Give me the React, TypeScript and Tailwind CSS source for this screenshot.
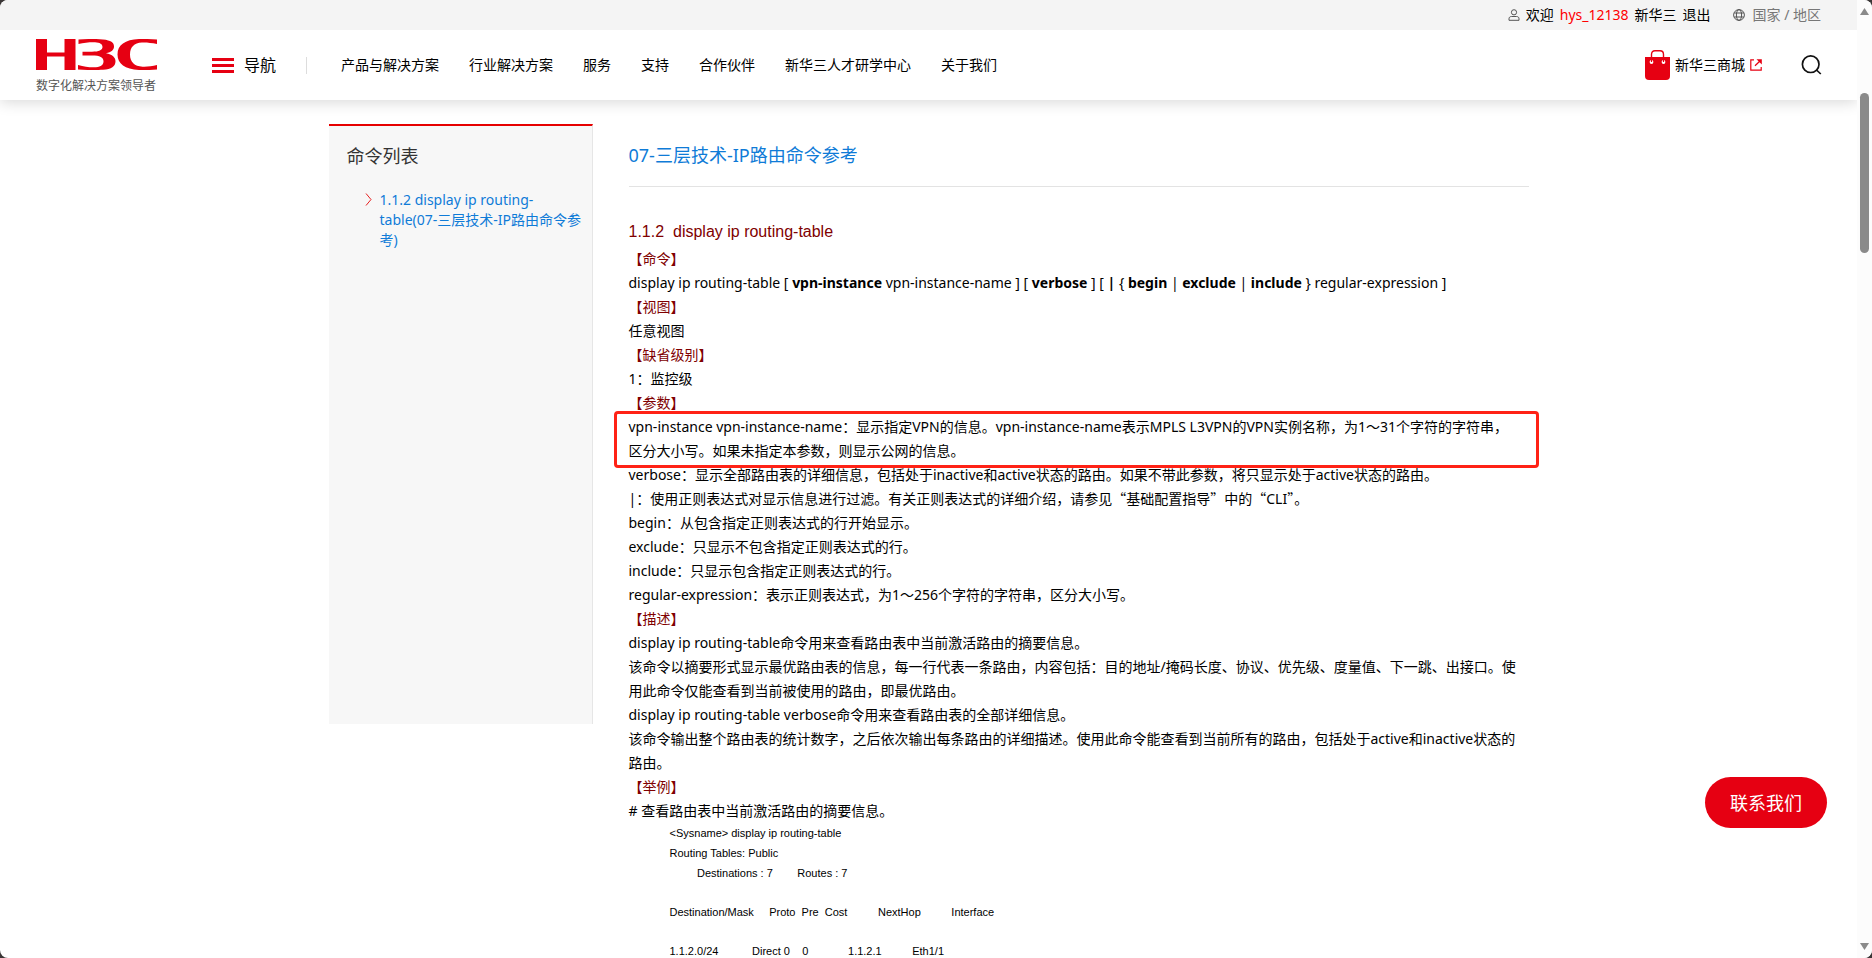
import React from "react";

const NAV_ITEMS = ["产品与解决方案", "行业解决方案", "服务", "支持", "合作伙伴", "新华三人才研学中心", "关于我们"];

function Logo() {
  return (
    <svg viewBox="0 0 121 31" className="h-[31px] w-[121px]" fill="#e60012" role="img" aria-label="H3C">
      <path d="M0 0h11v13.500h17.500V0h11v31h-11V17.500H11V31H0z" />
      <path d="M42.500 .5C50-.1 60-.3 67 .4C75 1.200 78 3.500 78 7.400C78 10.800 75.500 13 70 14.300C76.500 15.600 79.500 18.500 79.500 22.300C79.500 27.500 75.500 30.200 67 30.800C59 31.300 50 31.100 42 30.500V26C49 28 55 28.600 60 28.200C65.500 27.700 67.500 25.500 67.500 22.300C67.500 18.500 64 16.500 56 16.500H46.500V12.700H56C63 12.700 66.500 11 66.500 8C66.500 5 64 3.500 59 3.200C54 3 48 3.700 42.500 5z" />
      <path d="M121 .6V5C115 3.800 110.500 3.300 106 3.500C98 4 94 8 94 15.500C94 23 98.500 27.300 106.500 27.700C111 27.900 116 27.300 121 26V30.500C115 31.100 109 31.200 103 30.900C89 30.200 81.500 25 81.500 15.500C81.500 6 89 .8 103 .1C109-.2 115 0 121 .6z" />
    </svg>
  );
}

function UserIcon() {
  return (
    <svg viewBox="0 0 12 12" className="size-3" fill="none" stroke="#555" strokeWidth="1">
      <circle cx="6" cy="3.300" r="2.600" />
      <path d="M1 11.300V9.800C1 8.300 2 7.500 3.500 7.500h5C10 7.500 11 8.300 11 9.800v1.500z" />
    </svg>
  );
}

function GlobeIcon() {
  return (
    <svg viewBox="0 0 12 12" className="size-3" fill="none" stroke="#555" strokeWidth="1">
      <circle cx="6" cy="6" r="5.400" />
      <ellipse cx="6" cy="6" rx="2.600" ry="5.400" />
      <path d="M1.200 4h9.600M1.200 8h9.600" />
    </svg>
  );
}

function BagIcon() {
  return (
    <svg viewBox="0 0 25 30" className="h-[30px] w-[25px]">
      <path d="M6.500 8V4.500Q6.500 .8 10 .8h5Q18.500 .8 18.500 4.500V8" fill="none" stroke="#e60012" strokeWidth="1.400" />
      <path d="M0 7h25v19q0 4-4 4H4q-4 0-4-4z" fill="#e60012" />
      <circle cx="6.500" cy="12" r="1.900" fill="#fff" />
      <circle cx="18.500" cy="12" r="1.900" fill="#fff" />
      <path d="M6.500 9v3M18.500 9v3" stroke="#e60012" strokeWidth="1.200" />
    </svg>
  );
}

function ExternalIcon() {
  return (
    <svg viewBox="0 0 12 12" className="size-3" fill="none" stroke="#e60012" strokeWidth="1.200">
      <path d="M4 .8H.8v10.400h10.400V8" />
      <path d="M5 6.800L10 2" />
      <path d="M6.500 .2h5.300v5.300z" fill="#e60012" stroke="none" />
    </svg>
  );
}

function SearchIcon() {
  return (
    <svg viewBox="0 0 21 20" className="h-5 w-[21px]" fill="none" stroke="#111" strokeWidth="1.700">
      <circle cx="9.700" cy="9.200" r="8.300" />
      <path d="M15.500 15L19.800 19" />
    </svg>
  );
}

function Label({ children }: { children: React.ReactNode }) {
  return <h3 className="text-[#800000]">{children}</h3>;
}

function Quoted({ children }: { children: React.ReactNode }) {
  return (
    <>
      <span className="font-['Noto_Sans_CJK_SC',sans-serif] leading-none">“</span>
      {children}
      <span className="font-['Noto_Sans_CJK_SC',sans-serif] leading-none">”</span>
    </>
  );
}

function TopBar() {
  return (
    <div className="relative z-10 flex h-[30px] items-center justify-end bg-[#f4f4f4] pr-9">
      <UserIcon />
      <span className="ml-[6px]">欢迎</span>
      <a href="#user" className="ml-[6px] text-[#ff0000]">hys_12138</a>
      <a href="#home" className="ml-[6px]">新华三</a>
      <a href="#logout" className="ml-[6px]">退出</a>
      <a href="#region" className="ml-[22px] flex items-center gap-2 text-[#777]">
        <GlobeIcon />
        国家 / 地区
      </a>
    </div>
  );
}

function Header() {
  return (
    <header className="relative flex h-[70px] items-center bg-white pr-[35px] pl-9 shadow-[0_2px_14px_rgba(0,0,0,0.16)]">
      <a href="#h3c" className="flex flex-col gap-2 pt-[3px]">
        <Logo />
        <span className="text-xs leading-4 text-[#555]">数字化解决方案领导者</span>
      </a>
      <button className="ml-[55px] flex items-center gap-[10px] text-base">
        <span className="flex w-[22px] flex-col gap-[3px]">
          <span className="h-[3px] bg-[#e60012]" />
          <span className="h-[3px] bg-[#e60012]" />
          <span className="h-[3px] bg-[#e60012]" />
        </span>
        导航
      </button>
      <span className="ml-[30px] h-[17px] w-px bg-[#ddd]" />
      <nav className="ml-[34px] flex gap-[30px]">
        {NAV_ITEMS.map((item) => (
          <a key={item} href="#nav">{item}</a>
        ))}
      </nav>
      <a href="#mall" className="ml-auto flex items-center gap-[5px]">
        <BagIcon />
        新华三商城
        <ExternalIcon />
      </a>
      <button aria-label="搜索" className="ml-[39px]">
        <SearchIcon />
      </button>
    </header>
  );
}

function Sidebar() {
  return (
    <aside className="h-[600px] w-[264px] shrink-0 border-t-2 border-r border-t-[#e60000] border-r-[#e6e6e6] bg-[#f7f7f7] pt-[18px] pl-[18px]">
      <h2 className="text-lg leading-6 text-[#333]">命令列表</h2>
      <a href="#display" className="mt-[22px] flex gap-2 pl-[18px] leading-5 text-[#0f7bd7]">
        <svg viewBox="0 0 7 13" className="mt-[3px] h-[13px] w-[7px] shrink-0" fill="none" stroke="#e62020">
          <path d="M1 .5L6 6.500L1 12.500" />
        </svg>
        <span>
          1.1.2 display ip routing-
          <br />
          table(07-三层技术-IP路由命令参
          <br />
          考)
        </span>
      </a>
    </aside>
  );
}

function Article() {
  return (
    <main className="min-w-0 flex-1 leading-6">
      <h1 className="border-b border-[#e3e3e3] pt-[19px] pb-[19px] text-lg leading-6 text-[#0f7bd7]">
        07-三层技术-IP路由命令参考
      </h1>
      <h2 className="mt-[33px] mb-[3px] whitespace-pre font-['Liberation_Sans',Arial,sans-serif] text-base leading-6 text-[#800000]">
        {"1.1.2  display ip routing-table"}
      </h2>
      <Label>【命令】</Label>
      <p>
        display ip routing-table [ <b>vpn-instance</b> vpn-instance-name ] [ <b>verbose</b> ] [ <b>|</b> {"{"} <b>begin</b> | <b>exclude</b> | <b>include</b> {"}"} regular-expression ]
      </p>
      <Label>【视图】</Label>
      <p>任意视图</p>
      <Label>【缺省级别】</Label>
      <p>1：监控级</p>
      <Label>【参数】</Label>
      <div className="relative">
        <p>
          vpn-instance vpn-instance-name：显示指定VPN的信息。vpn-instance-name表示MPLS L3VPN的VPN实例名称，为1～31个字符的字符串，
          <br />
          区分大小写。如果未指定本参数，则显示公网的信息。
        </p>
        <div className="pointer-events-none absolute -top-1 right-[-10px] -bottom-[5px] left-[-15px] rounded-[4px] border-3 border-[#ff2216]" />
      </div>
      <p>verbose：显示全部路由表的详细信息，包括处于inactive和active状态的路由。如果不带此参数，将只显示处于active状态的路由。</p>
      <p>
        |：使用正则表达式对显示信息进行过滤。有关正则表达式的详细介绍，请参见<Quoted>基础配置指导</Quoted>中的<Quoted>CLI</Quoted>。
      </p>
      <p>begin：从包含指定正则表达式的行开始显示。</p>
      <p>exclude：只显示不包含指定正则表达式的行。</p>
      <p>include：只显示包含指定正则表达式的行。</p>
      <p>regular-expression：表示正则表达式，为1～256个字符的字符串，区分大小写。</p>
      <Label>【描述】</Label>
      <p>display ip routing-table命令用来查看路由表中当前激活路由的摘要信息。</p>
      <p>
        该命令以摘要形式显示最优路由表的信息，每一行代表一条路由，内容包括：目的地址/掩码长度、协议、优先级、度量值、下一跳、出接口。使用此命令仅能查看到当前被使用的路由，即最优路由。
      </p>
      <p>display ip routing-table verbose命令用来查看路由表的全部详细信息。</p>
      <p>
        该命令输出整个路由表的统计数字，之后依次输出每条路由的详细描述。使用此命令能查看到当前所有的路由，包括处于active和inactive状态的
        <br />
        路由。
      </p>
      <Label>【举例】</Label>
      <p># 查看路由表中当前激活路由的摘要信息。</p>
      <div className="flex flex-col gap-[19px] pl-[41px] text-[11px] leading-5">
        <pre className="font-['Liberation_Sans',Arial,sans-serif]">
          {"<Sysname> display ip routing-table\nRouting Tables: Public\n         Destinations : 7        Routes : 7"}
        </pre>
        <pre className="font-['Liberation_Sans',Arial,sans-serif]">
          {"Destination/Mask     Proto  Pre  Cost          NextHop          Interface"}
        </pre>
        <pre className="font-['Liberation_Sans',Arial,sans-serif]">
          {"1.1.2.0/24           Direct 0    0             1.1.2.1          Eth1/1"}
        </pre>
      </div>
    </main>
  );
}

function ScrollTrack() {
  return (
    <div className="flex w-[15px] shrink-0 flex-col items-center bg-[#fcfcfc] py-2">
      <svg viewBox="0 0 9 7" className="h-[7px] w-[9px]" fill="#8a8a8a">
        <path d="M4.500 0L9 7H0z" />
      </svg>
      <div className="mt-[78px] h-40 w-[9px] rounded-full bg-[#8a8a8a]" />
      <svg viewBox="0 0 9 7" className="mt-auto h-[7px] w-[9px]" fill="#8a8a8a">
        <path d="M4.500 7L9 0H0z" />
      </svg>
    </div>
  );
}

export default function App() {
  return (
    <div className="h-screen bg-[#3a3636]">
      <div className="flex h-full overflow-hidden rounded-lg bg-white font-['Noto_Sans','Noto_Sans_CJK_SC',sans-serif] text-sm text-black">
        <div className="relative min-w-0 flex-1 overflow-hidden">
          <TopBar />
          <Header />
          <div className="mx-auto mt-6 flex max-w-[1200px] items-start gap-9">
            <Sidebar />
            <Article />
          </div>
          <button className="absolute right-[30px] bottom-[130px] h-[51px] rounded-full bg-[#e60012] px-[25px] text-lg text-white">
            联系我们
          </button>
        </div>
        <ScrollTrack />
      </div>
    </div>
  );
}
